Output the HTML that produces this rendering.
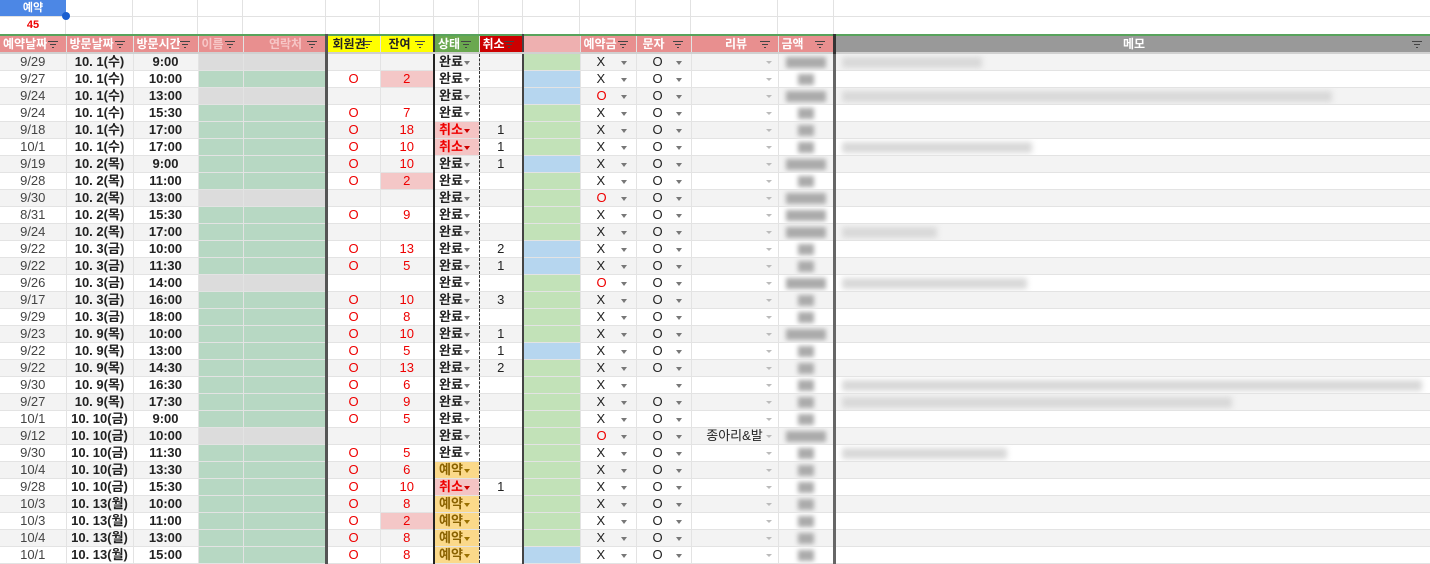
<!DOCTYPE html>
<html><head><meta charset="utf-8">
<style>
*{margin:0;padding:0;box-sizing:border-box}
body{width:1430px;height:553px;overflow:hidden;background:#fff;font-family:"Liberation Sans","Noto Sans CJK KR",sans-serif;font-size:13px;color:#222}
.top{position:absolute;left:0;top:0;width:1430px;height:34px}
.top .g{position:absolute;top:0;height:34px;border-right:1px solid #e2e2e2}
.top .h{position:absolute;left:0;top:16px;width:1430px;border-top:1px solid #e2e2e2}
.sel{position:absolute;left:0;top:0;width:66px;height:16px;background:#4c87e5;color:#fff;font-weight:bold;text-align:center;line-height:16px;font-size:11px}
.dot{position:absolute;left:62px;top:12px;width:8px;height:8px;border-radius:50%;background:#1a5fd0}
.n45{position:absolute;left:0;top:17px;width:66px;height:17px;text-align:center;color:#e00;font-weight:bold;line-height:17px;font-size:11px}
table{position:absolute;left:0;top:34px;border-collapse:collapse;table-layout:fixed;width:1430px}
td{height:17px;border-right:1px solid #e3e3e3;border-bottom:1px solid #e3e3e3;text-align:center;white-space:nowrap;overflow:hidden;position:relative;line-height:16px;padding:0}
tr.hd td{background:#e88f8f;color:#fff;font-weight:bold;font-size:12px;border-top:2px solid #58a35c;height:17px;border-bottom:2px solid #d0d0d0;text-align:left;padding-left:3px;box-shadow:0 2px 2px rgba(0,0,0,.08)}
tr.hd td.y{background:#ffff00;color:#222}
tr.hd td.gs{background:#6aa84f}
tr.hd td.rd{background:#cc0000}
tr.hd td.bp{background:#eeb0b0}
tr.hd td.mm{background:#999;font-weight:bold}
.f{position:absolute;right:8px;top:5px;width:10px;height:6px;border-top:1.5px solid #444}
.f:before{content:"";position:absolute;left:2px;top:2px;width:6px;border-top:1.5px solid #444}
.f:after{content:"";position:absolute;left:4px;top:4.5px;width:2px;border-top:1.5px solid #444}
tr.a td{background:#f3f3f3}
td.c1{color:#444}
td.b{font-weight:bold}
td.nm,td.ph{background:#b7d8c3 !important}
td.nm.gr,td.ph.gr{background:#dcdcdc !important}
td.ph{border-right:3px solid #555}
td.o,td.r{color:#e00}
td.pk{background:#f4c7c7 !important}
td.st{border-left:2px solid #222;border-right:1px dashed #333;font-weight:bold;text-align:left;padding-left:4px}
td.st:after,td.dd:after{content:"";position:absolute;right:9px;top:7px;border-left:3.5px solid transparent;border-right:3.5px solid transparent;border-top:4px solid #777}
td.dd{text-align:left;padding-left:16px}
td.rv:after{content:"";position:absolute;right:6px;top:7px;border-left:3px solid transparent;border-right:3px solid transparent;border-top:3px solid #bbb}
td.cx{color:#e00 !important;background:#f4c4c4 !important}
td.cx:after{border-top-color:#c00}
td.ry{background:#fbd98a !important;color:#8a6200}
td.ry:after{border-top-color:#9a7000}
td.cn{border-right:2px solid #444}
td.gn{background:#c2e2b8 !important}
td.bu{background:#b6d6ef !important}
td.red{color:#e00}
td.am{border-right:3px solid #666}
.blob{display:inline-block;height:11px;background:#aaa;filter:blur(2.5px);vertical-align:middle}
.mb{position:absolute;left:6px;top:3px;height:11px;background:#d8d8d8;filter:blur(3px)}
td.mm{text-align:left}
</style></head><body>
<div class="top">
<div class="g" style="left:0;width:66px"></div><div class="g" style="left:66px;width:67px"></div><div class="g" style="left:133px;width:65px"></div><div class="g" style="left:198px;width:45px"></div><div class="g" style="left:243px;width:83px"></div><div class="g" style="left:326px;width:54px"></div><div class="g" style="left:380px;width:54px"></div><div class="g" style="left:434px;width:45px"></div><div class="g" style="left:479px;width:44px"></div><div class="g" style="left:523px;width:57px"></div><div class="g" style="left:580px;width:56px"></div><div class="g" style="left:636px;width:55px"></div><div class="g" style="left:691px;width:87px"></div><div class="g" style="left:778px;width:56px"></div>
<div class="h"></div>
<div class="sel">예약</div><div class="dot"></div><div class="n45">45</div>
</div>
<table>
<colgroup><col style="width:66px"><col style="width:67px"><col style="width:65px"><col style="width:45px"><col style="width:83px"><col style="width:54px"><col style="width:54px"><col style="width:45px"><col style="width:44px"><col style="width:57px"><col style="width:56px"><col style="width:55px"><col style="width:87px"><col style="width:56px"><col style="width:596px"></colgroup>
<tr class="hd"><td>예약날짜<span class="f"></span></td><td>방문날짜<span class="f"></span></td><td>방문시간<span class="f"></span></td><td style="color:#f6c6c6">이름<span class="f"></span></td><td style="border-right:3px solid #555;text-align:center;color:#f6c6c6">연락처<span class="f"></span></td><td class="y" style="padding-left:5px">회원권<span class="f"></span></td><td class="y" style="border-right:2px solid #333;padding-left:8px">잔여<span class="f"></span></td><td class="gs">상태<span class="f"></span></td><td class="rd" style="border-right:2px solid #444">취소<span class="f"></span></td><td class="bp"></td><td>예약금<span class="f"></span></td><td style="padding-left:6px">문자<span class="f"></span></td><td style="text-align:center">리뷰<span class="f"></span></td><td style="border-right:3px solid #333">금액<span class="f"></span></td><td class="mm" style="text-align:center">메모<span class="f"></span></td></tr>

<tr class="a"><td class="c1">9/29</td><td class="b">10. 1(수)</td><td class="b">9:00</td><td class="nm gr"></td><td class="ph gr"></td><td class="o"></td><td class="r"></td><td class="st">완료</td><td class="cn"></td><td class="gn"></td><td class="dd">X</td><td class="dd">O</td><td class="rv"></td><td class="am"><span class="blob" style="width:40px"></span></td><td class="mm"><div class="mb" style="width:140px"></div></td></tr>
<tr><td class="c1">9/27</td><td class="b">10. 1(수)</td><td class="b">10:00</td><td class="nm"></td><td class="ph"></td><td class="o">O</td><td class="r pk">2</td><td class="st">완료</td><td class="cn"></td><td class="bu"></td><td class="dd">X</td><td class="dd">O</td><td class="rv"></td><td class="am"><span class="blob" style="width:16px"></span></td><td class="mm"></td></tr>
<tr class="a"><td class="c1">9/24</td><td class="b">10. 1(수)</td><td class="b">13:00</td><td class="nm gr"></td><td class="ph gr"></td><td class="o"></td><td class="r"></td><td class="st">완료</td><td class="cn"></td><td class="bu"></td><td class="dd red">O</td><td class="dd">O</td><td class="rv"></td><td class="am"><span class="blob" style="width:40px"></span></td><td class="mm"><div class="mb" style="width:490px"></div></td></tr>
<tr><td class="c1">9/24</td><td class="b">10. 1(수)</td><td class="b">15:30</td><td class="nm"></td><td class="ph"></td><td class="o">O</td><td class="r">7</td><td class="st">완료</td><td class="cn"></td><td class="gn"></td><td class="dd">X</td><td class="dd">O</td><td class="rv"></td><td class="am"><span class="blob" style="width:16px"></span></td><td class="mm"></td></tr>
<tr class="a"><td class="c1">9/18</td><td class="b">10. 1(수)</td><td class="b">17:00</td><td class="nm"></td><td class="ph"></td><td class="o">O</td><td class="r">18</td><td class="st cx">취소</td><td class="cn">1</td><td class="gn"></td><td class="dd">X</td><td class="dd">O</td><td class="rv"></td><td class="am"><span class="blob" style="width:16px"></span></td><td class="mm"></td></tr>
<tr><td class="c1">10/1</td><td class="b">10. 1(수)</td><td class="b">17:00</td><td class="nm"></td><td class="ph"></td><td class="o">O</td><td class="r">10</td><td class="st cx">취소</td><td class="cn">1</td><td class="gn"></td><td class="dd">X</td><td class="dd">O</td><td class="rv"></td><td class="am"><span class="blob" style="width:16px"></span></td><td class="mm"><div class="mb" style="width:190px"></div></td></tr>
<tr class="a"><td class="c1">9/19</td><td class="b">10. 2(목)</td><td class="b">9:00</td><td class="nm"></td><td class="ph"></td><td class="o">O</td><td class="r">10</td><td class="st">완료</td><td class="cn">1</td><td class="bu"></td><td class="dd">X</td><td class="dd">O</td><td class="rv"></td><td class="am"><span class="blob" style="width:40px"></span></td><td class="mm"></td></tr>
<tr><td class="c1">9/28</td><td class="b">10. 2(목)</td><td class="b">11:00</td><td class="nm"></td><td class="ph"></td><td class="o">O</td><td class="r pk">2</td><td class="st">완료</td><td class="cn"></td><td class="gn"></td><td class="dd">X</td><td class="dd">O</td><td class="rv"></td><td class="am"><span class="blob" style="width:16px"></span></td><td class="mm"></td></tr>
<tr class="a"><td class="c1">9/30</td><td class="b">10. 2(목)</td><td class="b">13:00</td><td class="nm gr"></td><td class="ph gr"></td><td class="o"></td><td class="r"></td><td class="st">완료</td><td class="cn"></td><td class="gn"></td><td class="dd red">O</td><td class="dd">O</td><td class="rv"></td><td class="am"><span class="blob" style="width:40px"></span></td><td class="mm"></td></tr>
<tr><td class="c1">8/31</td><td class="b">10. 2(목)</td><td class="b">15:30</td><td class="nm"></td><td class="ph"></td><td class="o">O</td><td class="r">9</td><td class="st">완료</td><td class="cn"></td><td class="gn"></td><td class="dd">X</td><td class="dd">O</td><td class="rv"></td><td class="am"><span class="blob" style="width:40px"></span></td><td class="mm"></td></tr>
<tr class="a"><td class="c1">9/24</td><td class="b">10. 2(목)</td><td class="b">17:00</td><td class="nm"></td><td class="ph"></td><td class="o"></td><td class="r"></td><td class="st">완료</td><td class="cn"></td><td class="gn"></td><td class="dd">X</td><td class="dd">O</td><td class="rv"></td><td class="am"><span class="blob" style="width:40px"></span></td><td class="mm"><div class="mb" style="width:95px"></div></td></tr>
<tr><td class="c1">9/22</td><td class="b">10. 3(금)</td><td class="b">10:00</td><td class="nm"></td><td class="ph"></td><td class="o">O</td><td class="r">13</td><td class="st">완료</td><td class="cn">2</td><td class="bu"></td><td class="dd">X</td><td class="dd">O</td><td class="rv"></td><td class="am"><span class="blob" style="width:16px"></span></td><td class="mm"></td></tr>
<tr class="a"><td class="c1">9/22</td><td class="b">10. 3(금)</td><td class="b">11:30</td><td class="nm"></td><td class="ph"></td><td class="o">O</td><td class="r">5</td><td class="st">완료</td><td class="cn">1</td><td class="bu"></td><td class="dd">X</td><td class="dd">O</td><td class="rv"></td><td class="am"><span class="blob" style="width:16px"></span></td><td class="mm"></td></tr>
<tr><td class="c1">9/26</td><td class="b">10. 3(금)</td><td class="b">14:00</td><td class="nm gr"></td><td class="ph gr"></td><td class="o"></td><td class="r"></td><td class="st">완료</td><td class="cn"></td><td class="gn"></td><td class="dd red">O</td><td class="dd">O</td><td class="rv"></td><td class="am"><span class="blob" style="width:40px"></span></td><td class="mm"><div class="mb" style="width:185px"></div></td></tr>
<tr class="a"><td class="c1">9/17</td><td class="b">10. 3(금)</td><td class="b">16:00</td><td class="nm"></td><td class="ph"></td><td class="o">O</td><td class="r">10</td><td class="st">완료</td><td class="cn">3</td><td class="gn"></td><td class="dd">X</td><td class="dd">O</td><td class="rv"></td><td class="am"><span class="blob" style="width:16px"></span></td><td class="mm"></td></tr>
<tr><td class="c1">9/29</td><td class="b">10. 3(금)</td><td class="b">18:00</td><td class="nm"></td><td class="ph"></td><td class="o">O</td><td class="r">8</td><td class="st">완료</td><td class="cn"></td><td class="gn"></td><td class="dd">X</td><td class="dd">O</td><td class="rv"></td><td class="am"><span class="blob" style="width:16px"></span></td><td class="mm"></td></tr>
<tr class="a"><td class="c1">9/23</td><td class="b">10. 9(목)</td><td class="b">10:00</td><td class="nm"></td><td class="ph"></td><td class="o">O</td><td class="r">10</td><td class="st">완료</td><td class="cn">1</td><td class="gn"></td><td class="dd">X</td><td class="dd">O</td><td class="rv"></td><td class="am"><span class="blob" style="width:40px"></span></td><td class="mm"></td></tr>
<tr><td class="c1">9/22</td><td class="b">10. 9(목)</td><td class="b">13:00</td><td class="nm"></td><td class="ph"></td><td class="o">O</td><td class="r">5</td><td class="st">완료</td><td class="cn">1</td><td class="bu"></td><td class="dd">X</td><td class="dd">O</td><td class="rv"></td><td class="am"><span class="blob" style="width:16px"></span></td><td class="mm"></td></tr>
<tr class="a"><td class="c1">9/22</td><td class="b">10. 9(목)</td><td class="b">14:30</td><td class="nm"></td><td class="ph"></td><td class="o">O</td><td class="r">13</td><td class="st">완료</td><td class="cn">2</td><td class="gn"></td><td class="dd">X</td><td class="dd">O</td><td class="rv"></td><td class="am"><span class="blob" style="width:16px"></span></td><td class="mm"></td></tr>
<tr><td class="c1">9/30</td><td class="b">10. 9(목)</td><td class="b">16:30</td><td class="nm"></td><td class="ph"></td><td class="o">O</td><td class="r">6</td><td class="st">완료</td><td class="cn"></td><td class="gn"></td><td class="dd">X</td><td class="dd"></td><td class="rv"></td><td class="am"><span class="blob" style="width:16px"></span></td><td class="mm"><div class="mb" style="width:580px"></div></td></tr>
<tr class="a"><td class="c1">9/27</td><td class="b">10. 9(목)</td><td class="b">17:30</td><td class="nm"></td><td class="ph"></td><td class="o">O</td><td class="r">9</td><td class="st">완료</td><td class="cn"></td><td class="gn"></td><td class="dd">X</td><td class="dd">O</td><td class="rv"></td><td class="am"><span class="blob" style="width:16px"></span></td><td class="mm"><div class="mb" style="width:390px"></div></td></tr>
<tr><td class="c1">10/1</td><td class="b">10. 10(금)</td><td class="b">9:00</td><td class="nm"></td><td class="ph"></td><td class="o">O</td><td class="r">5</td><td class="st">완료</td><td class="cn"></td><td class="gn"></td><td class="dd">X</td><td class="dd">O</td><td class="rv"></td><td class="am"><span class="blob" style="width:16px"></span></td><td class="mm"></td></tr>
<tr class="a"><td class="c1">9/12</td><td class="b">10. 10(금)</td><td class="b">10:00</td><td class="nm gr"></td><td class="ph gr"></td><td class="o"></td><td class="r"></td><td class="st">완료</td><td class="cn"></td><td class="gn"></td><td class="dd red">O</td><td class="dd">O</td><td class="rv">종아리&amp;발</td><td class="am"><span class="blob" style="width:40px"></span></td><td class="mm"></td></tr>
<tr><td class="c1">9/30</td><td class="b">10. 10(금)</td><td class="b">11:30</td><td class="nm"></td><td class="ph"></td><td class="o">O</td><td class="r">5</td><td class="st">완료</td><td class="cn"></td><td class="gn"></td><td class="dd">X</td><td class="dd">O</td><td class="rv"></td><td class="am"><span class="blob" style="width:16px"></span></td><td class="mm"><div class="mb" style="width:165px"></div></td></tr>
<tr class="a"><td class="c1">10/4</td><td class="b">10. 10(금)</td><td class="b">13:30</td><td class="nm"></td><td class="ph"></td><td class="o">O</td><td class="r">6</td><td class="st ry">예약</td><td class="cn"></td><td class="gn"></td><td class="dd">X</td><td class="dd">O</td><td class="rv"></td><td class="am"><span class="blob" style="width:16px"></span></td><td class="mm"></td></tr>
<tr><td class="c1">9/28</td><td class="b">10. 10(금)</td><td class="b">15:30</td><td class="nm"></td><td class="ph"></td><td class="o">O</td><td class="r">10</td><td class="st cx">취소</td><td class="cn">1</td><td class="gn"></td><td class="dd">X</td><td class="dd">O</td><td class="rv"></td><td class="am"><span class="blob" style="width:16px"></span></td><td class="mm"></td></tr>
<tr class="a"><td class="c1">10/3</td><td class="b">10. 13(월)</td><td class="b">10:00</td><td class="nm"></td><td class="ph"></td><td class="o">O</td><td class="r">8</td><td class="st ry">예약</td><td class="cn"></td><td class="gn"></td><td class="dd">X</td><td class="dd">O</td><td class="rv"></td><td class="am"><span class="blob" style="width:16px"></span></td><td class="mm"></td></tr>
<tr><td class="c1">10/3</td><td class="b">10. 13(월)</td><td class="b">11:00</td><td class="nm"></td><td class="ph"></td><td class="o">O</td><td class="r pk">2</td><td class="st ry">예약</td><td class="cn"></td><td class="gn"></td><td class="dd">X</td><td class="dd">O</td><td class="rv"></td><td class="am"><span class="blob" style="width:16px"></span></td><td class="mm"></td></tr>
<tr class="a"><td class="c1">10/4</td><td class="b">10. 13(월)</td><td class="b">13:00</td><td class="nm"></td><td class="ph"></td><td class="o">O</td><td class="r">8</td><td class="st ry">예약</td><td class="cn"></td><td class="gn"></td><td class="dd">X</td><td class="dd">O</td><td class="rv"></td><td class="am"><span class="blob" style="width:16px"></span></td><td class="mm"></td></tr>
<tr><td class="c1">10/1</td><td class="b">10. 13(월)</td><td class="b">15:00</td><td class="nm"></td><td class="ph"></td><td class="o">O</td><td class="r">8</td><td class="st ry">예약</td><td class="cn"></td><td class="bu"></td><td class="dd">X</td><td class="dd">O</td><td class="rv"></td><td class="am"><span class="blob" style="width:16px"></span></td><td class="mm"></td></tr>
</table>
</body></html>
